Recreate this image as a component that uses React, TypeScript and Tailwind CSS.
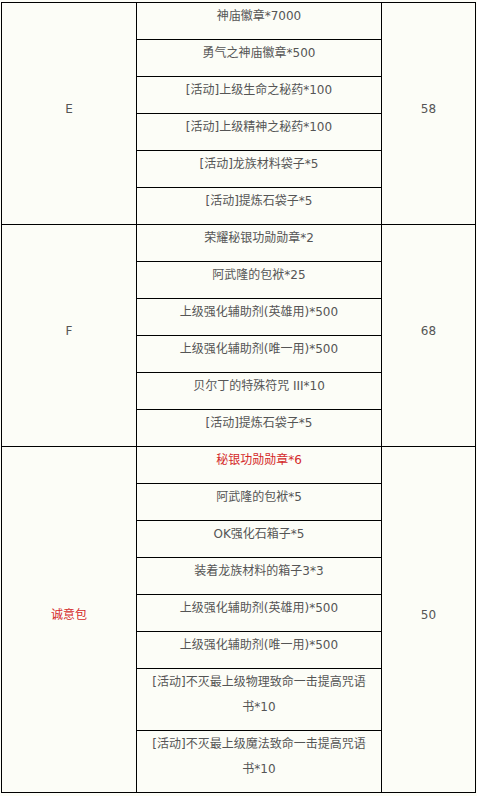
import React from 'react';

type Item = { lines: string[]; red?: boolean };

interface Section {
    label: string;
    labelRed?: boolean;
    items: Item[];
    count: string;
}

const it = (...lines: string[]): Item => ({ lines });

const sections: Section[] = [
    {
        label: 'E',
        count: '58',
        items: [
            it('神庙徽章*7000'),
            it('勇气之神庙徽章*500'),
            it('[活动]上级生命之秘药*100'),
            it('[活动]上级精神之秘药*100'),
            it('[活动]龙族材料袋子*5'),
            it('[活动]提炼石袋子*5'),
        ],
    },
    {
        label: 'F',
        count: '68',
        items: [
            it('荣耀秘银功勋勋章*2'),
            it('阿武隆的包袱*25'),
            it('上级强化辅助剂(英雄用)*500'),
            it('上级强化辅助剂(唯一用)*500'),
            it('贝尔丁的特殊符咒 III*10'),
            it('[活动]提炼石袋子*5'),
        ],
    },
    {
        label: '诚意包',
        labelRed: true,
        count: '50',
        items: [
            { lines: ['秘银功勋勋章*6'], red: true },
            it('阿武隆的包袱*5'),
            it('OK强化石箱子*5'),
            it('装着龙族材料的箱子3*3'),
            it('上级强化辅助剂(英雄用)*500'),
            it('上级强化辅助剂(唯一用)*500'),
            it('[活动]不灭最上级物理致命一击提高咒语', '书*10'),
            it('[活动]不灭最上级魔法致命一击提高咒语', '书*10'),
        ],
    },
];

export default function App() {
    return (
        <div
            className="min-h-[796px] w-[477px] bg-[#fcfdf7] pt-[2px] pl-[1px] text-[12px] leading-[25px] text-[#555]"
            style={{ fontFamily: '"DejaVu Sans", "Noto Sans CJK SC", sans-serif' }}
        >
            <div className="w-[475px] border-t border-l border-black">
                {sections.map((s) => (
                    <div key={s.label} className="flex border-b border-black">
                        {/* Grade */}
                        <div
                            className={`flex w-[135px] shrink-0 items-center justify-center border-r border-black pt-[1px] pb-[10px] ${
                                s.labelRed ? 'text-[#d42a2a]' : ''
                            }`}
                        >
                            {s.label}
                        </div>

                        {/* Rewards */}
                        <div className="w-[245px] shrink-0 border-r border-black">
                            {s.items.map((item, i) => (
                                <div
                                    key={i}
                                    className={`pt-[1px] pb-[10px] text-center ${
                                        i < s.items.length - 1 ? 'border-b border-black' : ''
                                    } ${item.red ? 'text-[#d42a2a]' : ''}`}
                                >
                                    {item.lines.map((l, j) => (
                                        <div key={j} className="whitespace-nowrap">
                                            {l}
                                        </div>
                                    ))}
                                </div>
                            ))}
                        </div>

                        {/* Count */}
                        <div className="flex w-[94px] shrink-0 items-center justify-center border-r border-black pt-[1px] pb-[10px]">
                            {s.count}
                        </div>
                    </div>
                ))}
            </div>
        </div>
    );
}
